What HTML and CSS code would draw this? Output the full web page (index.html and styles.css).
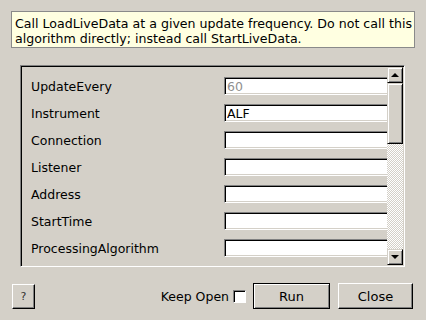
FILE: index.html
```html
<!DOCTYPE html>
<html lang="en">

<head>
    <meta charset="utf-8">
    <title>StartLiveData</title>
    <link rel="stylesheet" href="styles.css">
</head>

<body>
    <div class="dialog">
        <div class="tip">
            Call LoadLiveData at a given update frequency. Do not call this<br>
            algorithm directly; instead call StartLiveData.
        </div>

        <div class="frame">
            <div class="rows">
                <div class="row"><span class="label">UpdateEvery</span><input class="field" value="60" placeholder="60" readonly></div>
                <div class="row"><span class="label">Instrument</span><input class="field" value="ALF"></div>
                <div class="row"><span class="label">Connection</span><input class="field"></div>
                <div class="row"><span class="label">Listener</span><input class="field"></div>
                <div class="row"><span class="label">Address</span><input class="field"></div>
                <div class="row"><span class="label">StartTime</span><input class="field"></div>
                <div class="row"><span class="label">ProcessingAlgorithm</span><input class="field"></div>
            </div>
            <div class="scrollbar">
                <div class="sb-btn"><span class="arrow up"></span></div>
                <div class="sb-thumb"></div>
                <div class="sb-track"></div>
                <div class="sb-btn"><span class="arrow down"></span></div>
            </div>
        </div>

        <div class="actions">
            <button class="btn help">?</button>
            <span class="spacer"></span>
            <label class="keep">Keep Open <span class="check"></span></label>
            <button class="btn default run">Run</button>
            <button class="btn close">Close</button>
        </div>
    </div>
</body>

</html>
```

FILE: styles.css
```css
:root {
    --face: #d4d0c8;
    --light: #ffffff;
    --shadow: #808080;
    --dark: #000000;
    --tip-bg: #ffffe1;
}

* {
    box-sizing: border-box;
    margin: 0;
    padding: 0;
}

body {
    width: 426px;
    height: 320px;
    overflow: hidden;
    background: var(--face);
    font-family: "DejaVu Sans", sans-serif;
    font-size: 12.5px;
    color: #000;
}

.dialog {
    display: flex;
    flex-direction: column;
    padding-top: 11px;
}

.tip {
    margin-left: 11px;
    width: 404px;
    height: 37px;
    padding: 4px 0 0 3px;
    font-size: 12.6px;
    line-height: 15px;
    white-space: nowrap;
    background: var(--tip-bg);
    border: 1px solid #8a8a8a;
}

/* sunken frame around the property list */
.frame {
    display: flex;
    margin: 17px 0 0 20px;
    width: 385px;
    height: 202px;
    border: 1px solid;
    border-color: var(--shadow) var(--light) var(--light) var(--shadow);
    box-shadow: inset 1px 1px 0 var(--dark), inset -1px -1px 0 var(--face);
    padding: 1px;
}

.rows {
    flex: 1;
    overflow: hidden;
    display: flex;
    flex-direction: column;
    gap: 9px;
    padding: 10px 0 0 9px;
}

.row {
    display: flex;
    align-items: center;
    height: 18px;
    flex-shrink: 0;
}

.label {
    width: 193px;
    flex-shrink: 0;
}

.field {
    width: 180px;
    flex-shrink: 0;
    height: 18px;
    font: inherit;
    padding: 0 2px;
    background: #fff;
    border: 1px solid;
    border-color: var(--shadow) var(--light) var(--light) var(--shadow);
    box-shadow: inset 1px 1px 0 var(--dark), inset -1px -1px 0 var(--face);
    outline: none;
}

.field[readonly] {
    color: #8f8f8f;
}

.scrollbar {
    width: 16px;
    display: flex;
    flex-direction: column;
}

.sb-btn,
.sb-thumb {
    background: var(--face);
    border: 1px solid;
    border-color: var(--face) var(--dark) var(--dark) var(--face);
    box-shadow: inset 1px 1px 0 var(--light), inset -1px -1px 0 var(--shadow);
}

.sb-btn {
    height: 16px;
    display: flex;
    align-items: center;
    justify-content: center;
}

.sb-thumb {
    height: 61px;
}

.sb-track {
    flex: 1;
    background: repeating-conic-gradient(var(--light) 0 25%, var(--face) 0 50%) 0 0 / 2px 2px;
}

.arrow {
    width: 0;
    height: 0;
    border-left: 4px solid transparent;
    border-right: 4px solid transparent;
}

.arrow.up {
    border-bottom: 4px solid var(--dark);
}

.arrow.down {
    border-top: 4px solid var(--dark);
}

.actions {
    display: flex;
    align-items: center;
    margin-top: 16px;
    padding: 0 13px 0 12px;
}

.spacer {
    flex: 1;
}

.btn {
    font: inherit;
    font-size: 13px;
    height: 26px;
    background: var(--face);
    border: 1px solid;
    border-color: var(--light) var(--dark) var(--dark) var(--light);
    box-shadow: inset -1px -1px 0 var(--shadow);
    color: #000;
}

.help {
    width: 23px;
    height: 25px;
    font-size: 11px;
    color: #333;
}

.keep {
    display: flex;
    align-items: center;
    gap: 4px;
    margin-right: 7px;
    font-size: 12.5px;
}

.check {
    width: 13px;
    height: 13px;
    background: #fff;
    border: 1px solid;
    border-color: var(--shadow) var(--light) var(--light) var(--shadow);
    box-shadow: inset 1px 1px 0 var(--dark);
}

.run {
    width: 77px;
    margin-right: 8px;
}

.default {
    border: 1px solid var(--dark);
    box-shadow: inset 1px 1px 0 var(--light), inset -1px -1px 0 var(--shadow);
}

.close {
    width: 75px;
}
```
